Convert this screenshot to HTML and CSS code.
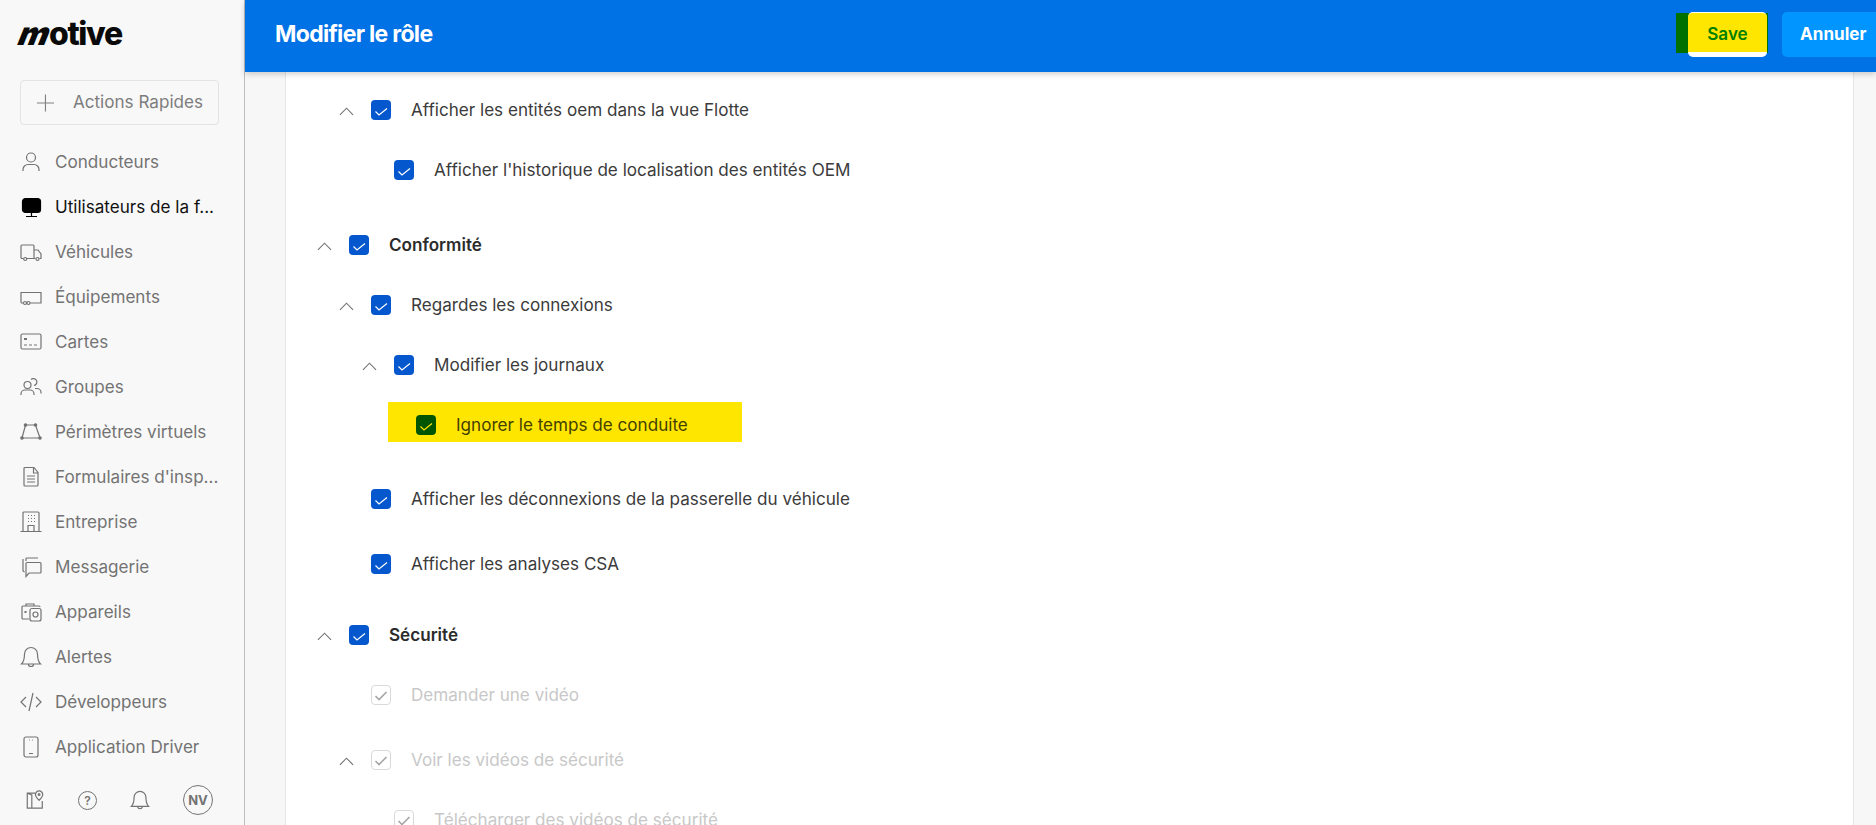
FILE: index.html
```html
<!DOCTYPE html>
<html lang="fr">
<head>
  <meta charset="UTF-8" />
  <title>Modifier le rôle</title>
  <link rel="stylesheet" href="styles.css">
</head>
<body>
  <aside class="sidebar">
    <div class="logo"><span class="logo-m">m</span>otive</div>
    <button class="quick-actions">
      <svg width="20" height="20" viewBox="0 0 20 20" fill="none" stroke="#808080" stroke-width="1.2"><path d="M10 1v18M1 10h18"/></svg>
      <span>Actions Rapides</span>
    </button>
    <nav class="nav">
      <a class="nav-item">
        <svg class="nav-icon" viewBox="0 0 22 22"><circle cx="11" cy="6.500" r="4.500"/><path d="M3 20v-1.500a5 5 0 0 1 5-5h6a5 5 0 0 1 5 5V20"/></svg>
        <span>Conducteurs</span>
      </a>
      <a class="nav-item active">
        <svg class="nav-icon" viewBox="0 0 22 22"><rect x="2.500" y="2.500" width="18" height="14" rx="3" fill="#000" stroke="#000"/><path d="M11.500 17v3M6 20.500h11" stroke="#000"/></svg>
        <span>Utilisateurs de la f...</span>
      </a>
      <a class="nav-item">
        <svg class="nav-icon" viewBox="0 0 22 22"><path d="M3.500 17.500H2a1 1 0 0 1-1-1V5a1 1 0 0 1 1-1h11a1 1 0 0 1 1 1v12.500H7M14 9h4l3 4v4.500h-1.500M14 17.500h1.500"/><circle cx="5.200" cy="18" r="1.500"/><circle cx="17.500" cy="18" r="1.500"/></svg>
        <span>Véhicules</span>
      </a>
      <a class="nav-item">
        <svg class="nav-icon" viewBox="0 0 22 22"><path d="M3 17H2a1 1 0 0 1-1-1V6.500h20V17H10"/><circle cx="5" cy="17" r="1.500"/><circle cx="8.500" cy="17" r="1.500"/></svg>
        <span>Équipements</span>
      </a>
      <a class="nav-item">
        <svg class="nav-icon" viewBox="0 0 22 22"><rect x="1" y="3" width="20" height="15" rx="1.500"/><path d="M4 7.500h3M4 8.500h3M4 14h3M9 14h3M14 14h3"/></svg>
        <span>Cartes</span>
      </a>
      <a class="nav-item">
        <svg class="nav-icon" viewBox="0 0 22 22"><circle cx="7.500" cy="9" r="3.500"/><path d="M1 19v-1a4 4 0 0 1 4-4h5a4 4 0 0 1 4 4v1"/><path d="M11 3.500a3.500 3.500 0 1 1 3 6M15 12.500h2a4 4 0 0 1 4 4v1"/></svg>
        <span>Groupes</span>
      </a>
      <a class="nav-item">
        <svg class="nav-icon" viewBox="0 0 22 22"><path d="M5.500 4h10l4.500 13H2z"/><circle cx="5.500" cy="4" r="1.200" fill="#737373"/><circle cx="15.500" cy="4" r="1.200" fill="#737373"/><circle cx="2" cy="17" r="1.200" fill="#737373"/><circle cx="20" cy="17" r="1.200" fill="#737373"/></svg>
        <span>Périmètres virtuels</span>
      </a>
      <a class="nav-item">
        <svg class="nav-icon" viewBox="0 0 22 22"><path d="M5 1.500h9l4 5V19a1 1 0 0 1-1 1H5a1 1 0 0 1-1-1V2.500a1 1 0 0 1 1-1zM13.500 2v5H18M7 10h8M7 13h8M7 16h8"/></svg>
        <span>Formulaires d'insp...</span>
      </a>
      <a class="nav-item">
        <svg class="nav-icon" viewBox="0 0 22 22"><path d="M0.500 20.500h21M3 20.500V2a1 1 0 0 1 1-1h14a1 1 0 0 1 1 1v18.500M8 20.500v-6h6v6M8 4.500h1M11 4.500h1M14 4.500h1M8 7.500h1M11 7.500h1M14 7.500h1M8 10.500h1M11 10.500h1M14 10.500h1"/></svg>
        <span>Entreprise</span>
      </a>
      <a class="nav-item">
        <svg class="nav-icon" viewBox="0 0 22 22"><path d="M6 5V3a1 1 0 0 1 1-1h11M3 3v12l1.500 1M7 6.500h13a1 1 0 0 1 1 1V16a1 1 0 0 1-1 1H9l-3 3.500V7.500a1 1 0 0 1 1-1z"/></svg>
        <span>Messagerie</span>
      </a>
      <a class="nav-item">
        <svg class="nav-icon" viewBox="0 0 22 22"><path d="M9 18H3a1 1 0 0 1-1-1V6a1 1 0 0 1 1-1h16a1 1 0 0 1 1 1M6 5V3h8v2"/><rect x="10" y="7.500" width="11" height="12.500" rx="2"/><circle cx="15.500" cy="13.500" r="2.500"/><path d="M4.500 11h2" stroke-width="2"/></svg>
        <span>Appareils</span>
      </a>
      <a class="nav-item">
        <svg class="nav-icon" viewBox="0 0 22 22"><path d="M11 1.500a6.500 6.500 0 0 0-6.500 6.500c0 6-1 8-3 10h19c-2-2-3-4-3-10A6.500 6.500 0 0 0 11 1.500zM8.500 18.500a2.500 2 0 0 0 5 0"/></svg>
        <span>Alertes</span>
      </a>
      <a class="nav-item">
        <svg class="nav-icon" viewBox="0 0 22 22"><path d="M6 6l-5 5 5 5M16 6l5 5-5 5M13 2L9 20"/></svg>
        <span>Développeurs</span>
      </a>
      <a class="nav-item">
        <svg class="nav-icon" viewBox="0 0 22 22"><rect x="4" y="1" width="14" height="20" rx="2"/><path d="M9 17.500h4M9 4h.8M12 4h.8"/></svg>
        <span>Application Driver</span>
      </a>
    </nav>
    <div class="side-footer">
      <svg class="foot-icon" viewBox="0 0 22 22"><path d="M11 3.500H2.500v16.500H19V12M2.500 3.500l5 2V20"/><path d="M15.500 1a4 4 0 0 0-4 4c0 2.500 4 6.500 4 6.500s4-4 4-6.500a4 4 0 0 0-4-4z"/><circle cx="15.500" cy="5" r="1"/></svg>
      <span class="help-icon">?</span>
      <svg class="foot-icon" viewBox="0 0 22 22"><path d="M11 1.500a6.500 6.500 0 0 0-6.500 6.500c0 6-1 8-3 10h19c-2-2-3-4-3-10A6.500 6.500 0 0 0 11 1.500zM8.500 18.500a2.500 2 0 0 0 5 0"/></svg>
      <span class="avatar">NV</span>
    </div>
  </aside>

  <main class="main">
    <header class="topbar">
      <h1>Modifier le rôle</h1>
      <div class="top-actions">
        <div class="save-wrap"><button class="btn-save">Save</button></div>
        <button class="btn-cancel">Annuler</button>
      </div>
    </header>
    <div class="content">
      <section class="card">
        <div class="row lvl1">
          <svg class="caret" viewBox="0 0 16 9"><path d="M1 8l7-7 7 7"/></svg>
          <span class="check"><svg viewBox="0 0 20 20"><path d="M4.500 11.500l3.500 3.500L16 8.500"/></svg></span>
          <span class="label">Afficher les entités oem dans la vue Flotte</span>
        </div>
        <div class="row lvl2 gap-b">
          <span class="check"><svg viewBox="0 0 20 20"><path d="M4.500 11.500l3.500 3.500L16 8.500"/></svg></span>
          <span class="label">Afficher l'historique de localisation des entités OEM</span>
        </div>
        <div class="row lvl0 gap-c">
          <svg class="caret" viewBox="0 0 16 9"><path d="M1 8l7-7 7 7"/></svg>
          <span class="check"><svg viewBox="0 0 20 20"><path d="M4.500 11.500l3.500 3.500L16 8.500"/></svg></span>
          <span class="label strong">Conformité</span>
        </div>
        <div class="row lvl1 gap-b">
          <svg class="caret" viewBox="0 0 16 9"><path d="M1 8l7-7 7 7"/></svg>
          <span class="check"><svg viewBox="0 0 20 20"><path d="M4.500 11.500l3.500 3.500L16 8.500"/></svg></span>
          <span class="label">Regardes les connexions</span>
        </div>
        <div class="row lvl2 gap-b">
          <svg class="caret" viewBox="0 0 16 9"><path d="M1 8l7-7 7 7"/></svg>
          <span class="check"><svg viewBox="0 0 20 20"><path d="M4.500 11.500l3.500 3.500L16 8.500"/></svg></span>
          <span class="label">Modifier les journaux</span>
        </div>
        <div class="row highlight">
          <span class="check check-hl"><svg viewBox="0 0 20 20"><path d="M4.500 11.500l3.500 3.500L16 8.500"/></svg></span>
          <span class="label">Ignorer le temps de conduite</span>
        </div>
        <div class="row lvl1 gap-d">
          <span class="check"><svg viewBox="0 0 20 20"><path d="M4.500 11.500l3.500 3.500L16 8.500"/></svg></span>
          <span class="label">Afficher les déconnexions de la passerelle du véhicule</span>
        </div>
        <div class="row lvl1 gap-e">
          <span class="check"><svg viewBox="0 0 20 20"><path d="M4.500 11.500l3.500 3.500L16 8.500"/></svg></span>
          <span class="label">Afficher les analyses CSA</span>
        </div>
        <div class="row lvl0 gap-f">
          <svg class="caret" viewBox="0 0 16 9"><path d="M1 8l7-7 7 7"/></svg>
          <span class="check"><svg viewBox="0 0 20 20"><path d="M4.500 11.500l3.500 3.500L16 8.500"/></svg></span>
          <span class="label strong">Sécurité</span>
        </div>
        <div class="row lvl1 gap-b off">
          <span class="check"><svg viewBox="0 0 20 20"><path d="M4.500 11l3.500 3.500L15.500 7"/></svg></span>
          <span class="label">Demander une vidéo</span>
        </div>
        <div class="row lvl1 gap-e off">
          <svg class="caret" viewBox="0 0 16 9"><path d="M1 8l7-7 7 7"/></svg>
          <span class="check"><svg viewBox="0 0 20 20"><path d="M4.500 11l3.500 3.500L15.500 7"/></svg></span>
          <span class="label">Voir les vidéos de sécurité</span>
        </div>
        <div class="row lvl2 gap-b off">
          <span class="check"><svg viewBox="0 0 20 20"><path d="M4.500 11l3.500 3.500L15.500 7"/></svg></span>
          <span class="label">Télécharger des vidéos de sécurité</span>
        </div>
      </section>
    </div>
  </main>
</body>
</html>
```

FILE: styles.css
```css
* {
  box-sizing: border-box;
}
html, body {
  height: 100%;
}
body {
  margin: 0;
  display: flex;
  height: 825px;
  overflow: hidden;
  font-family: Inter, "Noto Sans", sans-serif;
  background: #f7f7f7;
  color: #333;
}
.sidebar {
  width: 245px;
  flex-shrink: 0;
  background: #f8f8f8;
  border-right: 1px solid #bdbdbd;
  padding: 0 20px;
  display: flex;
  flex-direction: column;
}
.logo {
  height: 80px;
  padding-top: 12px;
  font-size: 32px;
  font-weight: 800;
  letter-spacing: -1.3px;
  color: #0a0a0a;
  line-height: 44px;
}
.logo-m {
  display: inline-block;
  transform: skewX(-22deg);
  font-weight: 900;
}
.quick-actions {
  width: 199px;
  height: 45px;
  display: flex;
  align-items: center;
  gap: 18px;
  padding: 0 15px 2px;
  background: #f8f8f8;
  border: 1px solid #e3e3e3;
  border-radius: 4px;
  font-family: inherit;
  font-size: 17.100px;
  color: #7d7d7d;
  white-space: nowrap;
}
.quick-actions svg {
  margin-top: 2px;
}
.nav {
  margin-top: 14px;
  display: flex;
  flex-direction: column;
}
.nav-item {
  height: 45px;
  display: flex;
  align-items: center;
  gap: 13px;
  font-size: 17.100px;
  color: #737373;
  white-space: nowrap;
}
.nav-item.active {
  color: #111;
}
.nav-icon {
  width: 22px;
  height: 22px;
  flex-shrink: 0;
  fill: none;
  stroke: #737373;
  stroke-width: 1.2;
}
.side-footer {
  margin-top: 16px;
  display: flex;
  align-items: center;
  padding-left: 5px;
  gap: 33px;
}
.foot-icon {
  width: 20px;
  height: 20px;
  fill: none;
  stroke: #737373;
  stroke-width: 1.3;
}
.help-icon {
  width: 19px;
  height: 19px;
  border: 1.300px solid #737373;
  border-radius: 50%;
  font-size: 12px;
  font-weight: 600;
  line-height: 17px;
  text-align: center;
  color: #737373;
}
.avatar {
  width: 30px;
  height: 30px;
  flex-shrink: 0;
  border: 1px solid #737373;
  border-radius: 50%;
  font-size: 13px;
  font-weight: 700;
  line-height: 28px;
  text-align: center;
  color: #737373;
}
.main {
  flex: 1;
  min-width: 0;
  display: flex;
  flex-direction: column;
}
.topbar {
  height: 72px;
  flex-shrink: 0;
  background: #0072e6;
  display: flex;
  align-items: center;
  justify-content: space-between;
  padding-left: 30px;
  box-shadow: 0 2px 6px rgba(0,0,0,0.2);
  position: relative;
  z-index: 2;
}
.topbar h1 {
  margin: 0 0 4px;
  font-size: 23px;
  font-weight: 700;
  letter-spacing: -0.7px;
  color: #fff;
}
.top-actions {
  display: flex;
  align-items: center;
  gap: 14px;
  margin-right: -10px;
  margin-top: -3px;
}
.save-wrap {
  background: #007000;
  padding: 1px 1px 1px 12px;
  height: 40px;
  align-self: flex-start;
  margin-top: 1px;
}
.btn-save {
  width: 79px;
  height: 45px;
  margin-top: -2px;
  display: block;
  padding: 2px 0 0;
  background: #ffe600;
  color: #008000;
  border: none;
  border-bottom: 5px solid #fff;
  border-top: 1px solid #fff;
  border-radius: 5px;
  font-family: inherit;
  font-size: 17.100px;
  font-weight: 600;
}
.btn-cancel {
  width: 104px;
  height: 45px;
  background: #0095ff;
  color: #fff;
  border: none;
  border-radius: 5px;
  font-family: inherit;
  font-size: 17.100px;
  font-weight: 700;
  text-align: left;
  padding: 0 0 3px 18px;
}
.content {
  flex: 1;
  min-height: 0;
  overflow: hidden;
  padding: 0 22px 0 40px;
}
.card {
  height: 100%;
  background: #fff;
  border-left: 1px solid #e6e6e6;
  border-right: 1px solid #e6e6e6;
  padding: 28px 0 0 37px;
}
.row {
  display: flex;
  align-items: center;
  height: 20px;
  font-size: 17.100px;
  position: relative;
}
.lvl0 { padding-left: 26px; }
.lvl1 { padding-left: 48px; }
.lvl2 { padding-left: 71px; }
.gap-b { margin-top: 40px; }
.gap-c { margin-top: 55px; }
.gap-d { margin-top: 47px; }
.gap-e { margin-top: 45px; }
.gap-f { margin-top: 51px; }
.caret {
  position: absolute;
  width: 15px;
  height: 9px;
  margin-left: -32px;
  margin-top: 2px;
  fill: none;
  stroke: #737373;
  stroke-width: 1.2;
}
.check {
  width: 20px;
  height: 20px;
  flex-shrink: 0;
  background: #0457cc;
  border-radius: 4px;
  display: block;
}
.check svg {
  display: block;
  fill: none;
  stroke: #fff;
  stroke-width: 1.2;
}
.label {
  margin: 0 0 2px 20px;
  color: #3b3b3b;
  white-space: nowrap;
}
.strong {
  font-weight: 600;
  color: #2b2b2b;
}
.highlight {
  background: #ffe600;
  height: 40px;
  width: 354px;
  margin: 27px 0 0 65px;
  padding: 6px 0 0 28px;
}
.check-hl {
  background: #005500;
}
.check-hl svg {
  stroke: #ffe600;
}
.highlight .label {
  color: #444000;
}
.off .check {
  background: #fff;
  border: 1px solid #d9d9d9;
}
.off .check svg {
  stroke: #a6a6a6;
  stroke-width: 1.6;
  margin: -1px;
}
.off .label {
  color: #c8c8c8;
}
```
